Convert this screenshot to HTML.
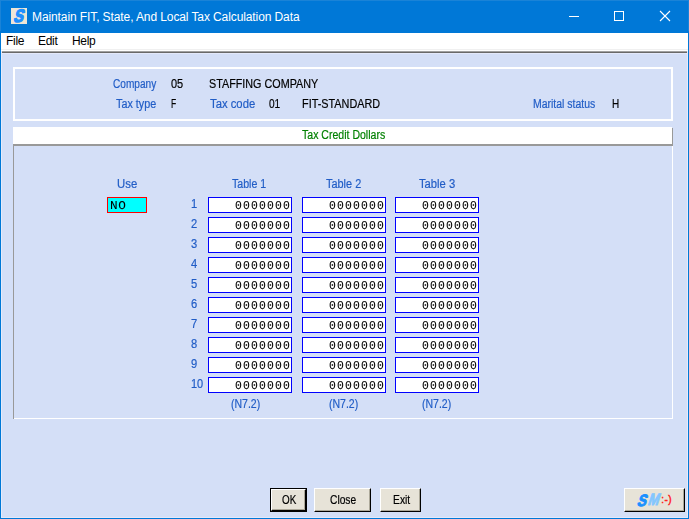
<!DOCTYPE html>
<html>
<head>
<meta charset="utf-8">
<title>Maintain FIT, State, And Local Tax Calculation Data</title>
<style>
html,body{margin:0;padding:0;}
body{width:689px;height:519px;overflow:hidden;background:#d4dff7;position:relative;font-family:"Liberation Sans",sans-serif;}
.abs{position:absolute;}
#win{position:absolute;left:0;top:0;width:689px;height:519px;background:#d4dff7;overflow:hidden;}
#title{position:absolute;left:0;top:0;width:689px;height:33px;background:#0078d7;}
#title .t{position:absolute;left:32px;top:10px;color:#fff;font-size:12px;line-height:14px;white-space:nowrap;letter-spacing:-0.1px;}
#menu{position:absolute;left:1px;top:33px;width:687px;height:18px;background:#fff;}
#menu span{position:absolute;top:1px;font-size:12px;line-height:14px;color:#000;white-space:nowrap;letter-spacing:-0.3px;}
#msep{position:absolute;left:1px;top:49px;width:687px;height:5px;background:linear-gradient(#f0f0f0 0,#f0f0f0 20%,#fff 20%,#fff 40%,#a0a0a0 40%,#a0a0a0 60%,#696969 60%,#696969 80%,#e4e9fb 80%,#e4e9fb 100%);}
.bl{position:absolute;top:33px;width:1px;height:486px;background:#0078d7;}
.tx{position:absolute;font-size:12.5px;line-height:14px;white-space:nowrap;transform-origin:0 50%;-webkit-text-stroke:0.2px;}
.fld{position:absolute;width:82px;height:14px;border:1px solid #0000ff;background:#fff;}
.btn{position:absolute;top:488px;height:24px;box-sizing:border-box;background:#e7e3d8;border-style:solid;border-width:1px;border-color:#fff #000 #000 #fff;}
.btn i{position:absolute;left:0;top:0;right:0;bottom:0;border-style:solid;border-width:0 1px 1px 0;border-color:#aca899;}
</style>
</head>
<body>
<div id="win">
  <div id="title">
    <div class="abs" style="left:0;top:0;width:689px;height:1px;background:#1a83d7"></div><div class="abs" style="left:0;top:0;width:1px;height:31px;background:#1a83d7"></div><div class="abs" style="left:688px;top:0;width:1px;height:31px;background:#1a83d7"></div>
    <svg class="abs" style="left:11px;top:8px" width="16" height="16" viewBox="0 0 16 16"><rect width="16" height="16" fill="#eee6d6"/><text x="2.4" y="14.1" transform="translate(4.1,0) skewX(-16) scale(0.8,1)" font-family="Liberation Sans, sans-serif" font-weight="bold" font-size="18" fill="#1e8fff" stroke="#1e8fff" stroke-width="1.3">S</text></svg>
    <div class="t">Maintain FIT, State, And Local Tax Calculation Data</div>
    <svg class="abs" style="left:560px;top:0" width="129" height="33" viewBox="0 0 129 33">
      <g stroke="#fff" stroke-width="1" fill="none" shape-rendering="crispEdges">
        <line x1="9" y1="16.5" x2="19" y2="16.5"/>
        <rect x="54.5" y="11.5" width="9" height="9"/>
      </g>
      <g stroke="#fff" stroke-width="1.1" fill="none">
        <line x1="100" y1="11" x2="110" y2="21"/>
        <line x1="110" y1="11" x2="100" y2="21"/>
      </g>
    </svg>
  </div>
  <div id="menu"><span style="left:5px">File</span><span style="left:37px">Edit</span><span style="left:71px">Help</span></div>
  <div id="msep"></div>
  <div class="bl" style="left:0"></div><div class="bl" style="left:688px"></div>
  <div class="abs" style="left:1px;top:51px;width:1px;height:467px;background:#e6ebfb"></div><div class="abs" style="left:687px;top:51px;width:1px;height:467px;background:#e6ebfb"></div>
  <div class="abs" style="left:1px;top:517px;width:687px;height:1px;background:#e4e9fb"></div>
  <div class="abs" style="left:0;top:518px;width:689px;height:1px;background:#0078d7"></div>

  <!-- header panel -->
  <div class="abs" style="left:13px;top:67px;width:656px;height:50px;border:2px solid #fff;"></div>
  <!-- bar -->
  <div class="abs" style="left:13px;top:127px;width:659px;height:17px;background:#fff;"></div>
  <div class="abs" style="left:13px;top:144px;width:660px;height:2px;background:#999;"></div>
  <div class="abs" style="left:672px;top:128px;width:1px;height:18px;background:#999;"></div>
  <!-- big panel -->
  <div class="abs" style="left:13px;top:146px;width:1px;height:273px;background:#999;"></div>
  <div class="abs" style="left:14px;top:418px;width:659px;height:1px;background:#fff;"></div>
  <div class="abs" style="left:672px;top:146px;width:1px;height:273px;background:#fff;"></div>

  <!-- Use field -->
  <div class="abs" style="left:107px;top:197px;width:38px;height:14px;border:1px solid #ff0000;background:#00ffff;">
  </div>

  <div class="fld" style="left:208px;top:197px"></div>
  <div class="fld" style="left:302px;top:197px"></div>
  <div class="fld" style="left:395px;top:197px"></div>
  <div class="fld" style="left:208px;top:217px"></div>
  <div class="fld" style="left:302px;top:217px"></div>
  <div class="fld" style="left:395px;top:217px"></div>
  <div class="fld" style="left:208px;top:237px"></div>
  <div class="fld" style="left:302px;top:237px"></div>
  <div class="fld" style="left:395px;top:237px"></div>
  <div class="fld" style="left:208px;top:257px"></div>
  <div class="fld" style="left:302px;top:257px"></div>
  <div class="fld" style="left:395px;top:257px"></div>
  <div class="fld" style="left:208px;top:277px"></div>
  <div class="fld" style="left:302px;top:277px"></div>
  <div class="fld" style="left:395px;top:277px"></div>
  <div class="fld" style="left:208px;top:297px"></div>
  <div class="fld" style="left:302px;top:297px"></div>
  <div class="fld" style="left:395px;top:297px"></div>
  <div class="fld" style="left:208px;top:317px"></div>
  <div class="fld" style="left:302px;top:317px"></div>
  <div class="fld" style="left:395px;top:317px"></div>
  <div class="fld" style="left:208px;top:337px"></div>
  <div class="fld" style="left:302px;top:337px"></div>
  <div class="fld" style="left:395px;top:337px"></div>
  <div class="fld" style="left:208px;top:357px"></div>
  <div class="fld" style="left:302px;top:357px"></div>
  <div class="fld" style="left:395px;top:357px"></div>
  <div class="fld" style="left:208px;top:377px"></div>
  <div class="fld" style="left:302px;top:377px"></div>
  <div class="fld" style="left:395px;top:377px"></div>

  <svg class="abs" style="left:0;top:0;will-change:transform" width="689" height="519" viewBox="0 0 689 519"><g transform="scale(0.95,1)" font-family="Liberation Mono, monospace" font-size="12" fill="#000" stroke="#000" stroke-width="0.1" text-rendering="geometricPrecision">
<text x="247.43 255.85 264.27 272.69 281.11 289.53 297.95" y="209">0000000</text>
<text x="346.37 354.80 363.22 371.64 380.06 388.48 396.90" y="209">0000000</text>
<text x="444.27 452.69 461.11 469.53 477.95 486.37 494.80" y="209">0000000</text>
<text x="247.43 255.85 264.27 272.69 281.11 289.53 297.95" y="229">0000000</text>
<text x="346.37 354.80 363.22 371.64 380.06 388.48 396.90" y="229">0000000</text>
<text x="444.27 452.69 461.11 469.53 477.95 486.37 494.80" y="229">0000000</text>
<text x="247.43 255.85 264.27 272.69 281.11 289.53 297.95" y="249">0000000</text>
<text x="346.37 354.80 363.22 371.64 380.06 388.48 396.90" y="249">0000000</text>
<text x="444.27 452.69 461.11 469.53 477.95 486.37 494.80" y="249">0000000</text>
<text x="247.43 255.85 264.27 272.69 281.11 289.53 297.95" y="269">0000000</text>
<text x="346.37 354.80 363.22 371.64 380.06 388.48 396.90" y="269">0000000</text>
<text x="444.27 452.69 461.11 469.53 477.95 486.37 494.80" y="269">0000000</text>
<text x="247.43 255.85 264.27 272.69 281.11 289.53 297.95" y="289">0000000</text>
<text x="346.37 354.80 363.22 371.64 380.06 388.48 396.90" y="289">0000000</text>
<text x="444.27 452.69 461.11 469.53 477.95 486.37 494.80" y="289">0000000</text>
<text x="247.43 255.85 264.27 272.69 281.11 289.53 297.95" y="309">0000000</text>
<text x="346.37 354.80 363.22 371.64 380.06 388.48 396.90" y="309">0000000</text>
<text x="444.27 452.69 461.11 469.53 477.95 486.37 494.80" y="309">0000000</text>
<text x="247.43 255.85 264.27 272.69 281.11 289.53 297.95" y="329">0000000</text>
<text x="346.37 354.80 363.22 371.64 380.06 388.48 396.90" y="329">0000000</text>
<text x="444.27 452.69 461.11 469.53 477.95 486.37 494.80" y="329">0000000</text>
<text x="247.43 255.85 264.27 272.69 281.11 289.53 297.95" y="349">0000000</text>
<text x="346.37 354.80 363.22 371.64 380.06 388.48 396.90" y="349">0000000</text>
<text x="444.27 452.69 461.11 469.53 477.95 486.37 494.80" y="349">0000000</text>
<text x="247.43 255.85 264.27 272.69 281.11 289.53 297.95" y="369">0000000</text>
<text x="346.37 354.80 363.22 371.64 380.06 388.48 396.90" y="369">0000000</text>
<text x="444.27 452.69 461.11 469.53 477.95 486.37 494.80" y="369">0000000</text>
<text x="247.43 255.85 264.27 272.69 281.11 289.53 297.95" y="389">0000000</text>
<text x="346.37 354.80 363.22 371.64 380.06 388.48 396.90" y="389">0000000</text>
<text x="444.27 452.69 461.11 469.53 477.95 486.37 494.80" y="389">0000000</text>
</g>
<g transform="scale(1.06,1)" font-family="Liberation Mono, monospace" font-size="12" fill="#000" stroke="#000" stroke-width="0.05" text-rendering="geometricPrecision"><text x="103.77 111.66" y="209">NO</text></g>
</svg>
  <!-- buttons -->
  <div class="abs" style="left:270px;top:488px;width:37px;height:24px;background:#000;"></div>
  <div class="btn" style="left:271px;top:489px;width:35px;height:22px;"><i></i></div>
  <div class="btn" style="left:314px;width:57px;"><i></i></div>
  <div class="btn" style="left:380px;width:41px;"><i></i></div>
  <div class="btn" style="left:624px;width:61px;"><i></i>
    <svg class="abs" style="left:-1px;top:-1px" width="61" height="24" viewBox="0 0 61 24" font-family="Liberation Sans, sans-serif" font-weight="bold">
      <text x="0" y="0" transform="translate(12.6,18) skewX(-18) scale(0.82,1)" font-size="16.5" fill="#1a90ff" stroke="#1a90ff" stroke-width="1">S</text>
      <text x="0" y="0" transform="translate(23.2,16.8) skewX(-18) scale(0.79,1)" font-size="16.5" fill="#84c6ff" stroke="#84c6ff" stroke-width="0.9">M</text>
      <text x="37.2" y="14.7" font-size="10" font-weight="normal" fill="#ff1818" stroke="#ff1818" stroke-width="0.4" letter-spacing="0.45">:-)</text>
    </svg>
  </div>

<div class="abs" style="left:0;top:0;width:689px;height:519px;will-change:transform">
<span class="tx" id="t0" style="left:113px;top:76.67px;color:#215dc6;transform:scaleX(0.8075)">Company</span>
<span class="tx" id="t1" style="left:171px;top:76.67px;color:#000;transform:scaleX(0.8773)">05</span>
<span class="tx" id="t2" style="left:209px;top:76.67px;color:#000;transform:scaleX(0.8624)">STAFFING COMPANY</span>
<span class="tx" id="t3" style="left:116px;top:96.67px;color:#215dc6;transform:scaleX(0.8634)">Tax type</span>
<span class="tx" id="t4" style="left:171px;top:96.67px;color:#000;transform:scaleX(0.6806)">F</span>
<span class="tx" id="t5" style="left:210px;top:96.67px;color:#215dc6;transform:scaleX(0.9034)">Tax code</span>
<span class="tx" id="t6" style="left:269px;top:96.67px;color:#000;transform:scaleX(0.8054)">01</span>
<span class="tx" id="t7" style="left:302px;top:96.67px;color:#000;transform:scaleX(0.8684)">FIT-STANDARD</span>
<span class="tx" id="t8" style="left:533px;top:96.67px;color:#215dc6;transform:scaleX(0.8367)">Marital status</span>
<span class="tx" id="t9" style="left:612px;top:96.67px;color:#000;transform:scaleX(0.7972)">H</span>
<span class="tx" id="t10" style="left:302px;top:127.67px;color:#008000;transform:scaleX(0.8435)">Tax Credit Dollars</span>
<span class="tx" id="t11" style="left:117px;top:176.67px;color:#215dc6;transform:scaleX(0.9085)">Use</span>
<span class="tx" id="t12" style="left:232px;top:176.67px;color:#215dc6;transform:scaleX(0.8484)">Table 1</span>
<span class="tx" id="t13" style="left:326px;top:176.67px;color:#215dc6;transform:scaleX(0.8732)">Table 2</span>
<span class="tx" id="t14" style="left:419px;top:176.67px;color:#215dc6;transform:scaleX(0.8980)">Table 3</span>
<span class="tx" id="t15" style="left:231px;top:396.67px;color:#215dc6;transform:scaleX(0.8407)">(N7.2)</span>
<span class="tx" id="t16" style="left:329px;top:396.67px;color:#215dc6;transform:scaleX(0.8407)">(N7.2)</span>
<span class="tx" id="t17" style="left:422px;top:396.67px;color:#215dc6;transform:scaleX(0.8407)">(N7.2)</span>
<span class="tx" id="t18" style="left:282px;top:492.67px;color:#000;transform:scaleX(0.7862)">OK</span>
<span class="tx" id="t19" style="left:330px;top:492.67px;color:#000;transform:scaleX(0.8196)">Close</span>
<span class="tx" id="t20" style="left:393px;top:492.67px;color:#000;transform:scaleX(0.8252)">Exit</span>
<span class="tx" id="t21" style="left:191px;top:196.67px;color:#215dc6;transform:scaleX(0.8917)">1</span>
<span class="tx" id="t22" style="left:191px;top:216.67px;color:#215dc6;transform:scaleX(0.8917)">2</span>
<span class="tx" id="t23" style="left:191px;top:236.67px;color:#215dc6;transform:scaleX(0.8917)">3</span>
<span class="tx" id="t24" style="left:191px;top:256.67px;color:#215dc6;transform:scaleX(0.8917)">4</span>
<span class="tx" id="t25" style="left:191px;top:276.67px;color:#215dc6;transform:scaleX(0.8917)">5</span>
<span class="tx" id="t26" style="left:191px;top:296.67px;color:#215dc6;transform:scaleX(0.8917)">6</span>
<span class="tx" id="t27" style="left:191px;top:316.67px;color:#215dc6;transform:scaleX(0.8917)">7</span>
<span class="tx" id="t28" style="left:191px;top:336.67px;color:#215dc6;transform:scaleX(0.8917)">8</span>
<span class="tx" id="t29" style="left:191px;top:356.67px;color:#215dc6;transform:scaleX(0.8917)">9</span>
<span class="tx" id="t30" style="left:191px;top:376.67px;color:#215dc6;transform:scaleX(0.8773)">10</span>
</div>
</div>
</body>
</html>
